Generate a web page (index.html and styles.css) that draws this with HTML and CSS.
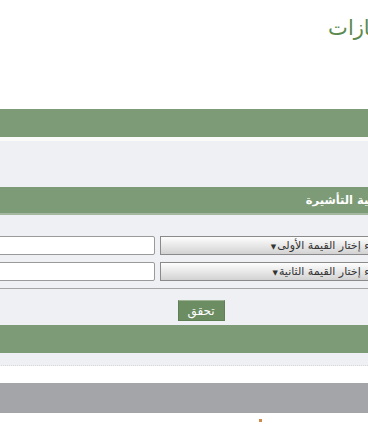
FILE: index.html
```html
<!DOCTYPE html>
<html lang="ar" dir="rtl">
<head>
    <meta charset="UTF-8">
    <meta name="viewport" content="width=device-width, initial-scale=1.0">
    <title>الامتيازات</title>
    <link rel="stylesheet" href="styles.css">
</head>
<body>
    <div class="page">
        <!-- العنوان -->
        <div class="header">
            <h1 class="title">الامتيازات</h1>
        </div>

        <div class="bar"></div>
        <div class="gap"></div>
        <div class="panel panel-top"></div>

        <div class="bar bar-title">خدمة الكترونية التأشيرة</div>

        <!-- النموذج -->
        <div class="panel form">
            <div class="row">
                <div class="select">الرجاء إختار القيمة الأولى<span class="arrow">▼</span></div>
                <input class="field" type="text">
            </div>
            <div class="row">
                <div class="select">الرجاء إختار القيمة الثانية<span class="arrow">▼</span></div>
                <input class="field" type="text">
            </div>
            <div class="sep"></div>
            <div class="actions">
                <button class="btn">تحقق</button>
            </div>
            <div class="bar"></div>
        </div>

        <div class="spacer"></div>
        <div class="bar bar-gray"></div>
        <div class="footer"><span class="dot"></span></div>
    </div>
</body>
</html>
```

FILE: styles.css
```css
/* الصفحة */
body {
    margin: 0;
    padding: 0;
    background: #ffffff;
    font-family: "DejaVu Sans", "Liberation Sans", sans-serif;
    overflow: hidden;
}

.page {
    direction: rtl;
    margin: 0 -74px 0 -40px;
}

/* العنوان */
.header {
    height: 109px;
    background: #ffffff;
}

.title {
    margin: 0;
    padding: 13px 0 0 0;
    margin-right: 30px;
    font-size: 21px;
    font-weight: normal;
    color: #5b8a4f;
    line-height: 30px;
}

/* الأشرطة */
.bar {
    height: 28px;
    background: #7d9b76;
}

.bar-title {
    height: 26px;
    border-bottom: 2px solid #a3b89e;
    color: #ffffff;
    font-weight: bold;
    font-size: 11.5px;
    line-height: 26px;
    padding-right: 2px;
}

.bar-gray {
    height: 30px;
    background: #a4a5a9;
}

.gap {
    height: 4px;
    background: #fbfcfa;
}

.panel {
    background: #eff0f3;
}

.panel-top {
    height: 46px;
}

/* النموذج */
.form {
    padding-top: 21px;
    padding-bottom: 12px;
    border-bottom: 1px dotted #d6d7da;
}

.row {
    display: flex;
    gap: 5px;
    padding-right: 22px;
    margin-bottom: 7px;
}

.select {
    flex: none;
    width: 231px;
    height: 17px;
    border: 1px solid #8a8a8a;
    background: linear-gradient(#fdfdfd, #e4e4e4 60%, #d2d2d2);
    font-size: 11px;
    line-height: 17px;
    color: #333333;
    padding-right: 27px;
    box-sizing: content-box;
    white-space: nowrap;
    overflow: hidden;
}

.arrow {
    font-size: 7px;
    margin-right: 1px;
}

.field {
    flex: none;
    width: 195px;
    height: 19px;
    box-sizing: border-box;
    border: 1px solid #9a9a9a;
    border-radius: 2px;
    background: #ffffff;
    margin: 0;
    padding: 0;
}

.sep {
    height: 1px;
    background: #a5a5a5;
    margin-top: 4px;
}

.actions {
    display: flex;
    justify-content: center;
    padding: 11px 0 4px 0;
}

.btn {
    width: 47px;
    height: 21px;
    background: #6b8d61;
    color: #ffffff;
    border: 1px solid #5f7f55;
    border-top-color: #9db394;
    font-family: "DejaVu Sans", sans-serif;
    font-size: 12px;
    padding: 0;
    cursor: pointer;
}

.spacer {
    height: 17px;
    background: #ffffff;
}

.footer {
    height: 10px;
    position: relative;
}

.dot {
    position: absolute;
    top: 6px;
    left: 299px;
    width: 3px;
    height: 3px;
    background: #d08a4a;
}
```
